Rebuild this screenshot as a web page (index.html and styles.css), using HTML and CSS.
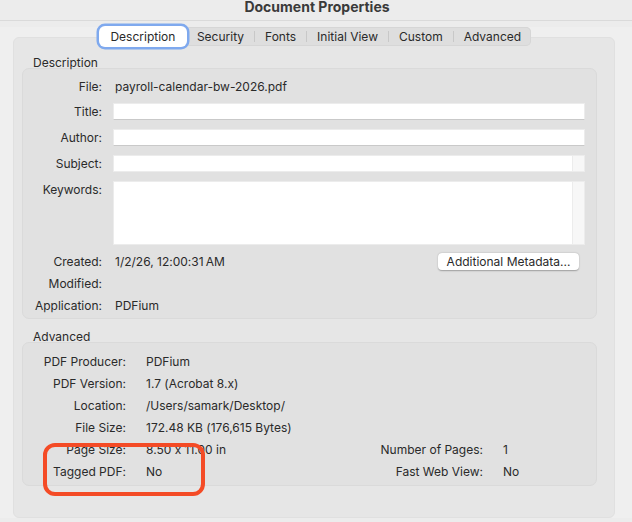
FILE: index.html
```html
<!DOCTYPE html>
<html>
<head>
    <title>Document Properties</title>
    <link rel="stylesheet" href="styles.css">
</head>
<body>
    <div class="titlebar">
        <h1>Document Properties</h1>
    </div>

    <div class="content">
        <div class="tabs">
            <button class="tab active">Description</button>
            <button class="tab">Security</button>
            <span class="sep"></span>
            <button class="tab">Fonts</button>
            <span class="sep"></span>
            <button class="tab">Initial View</button>
            <span class="sep"></span>
            <button class="tab">Custom</button>
            <span class="sep"></span>
            <button class="tab">Advanced</button>
        </div>

        <div class="panel">
            <div class="group-label">Description</div>
            <div class="group desc">
                <div class="row row-file">
                    <span class="label">File:</span>
                    <span class="value">payroll-calendar-bw-2026.pdf</span>
                </div>
                <div class="row row-field">
                    <span class="label">Title:</span>
                    <div class="field"></div>
                </div>
                <div class="row row-field">
                    <span class="label">Author:</span>
                    <div class="field"></div>
                </div>
                <div class="row row-field">
                    <span class="label">Subject:</span>
                    <div class="field scroll"><div class="track"></div></div>
                </div>
                <div class="row row-field row-keywords">
                    <span class="label">Keywords:</span>
                    <div class="field scroll tall"><div class="track"></div></div>
                </div>
                <div class="row row-info first">
                    <span class="label">Created:</span>
                    <span class="value">1/2/26, 12:00:31&#8201;AM</span>
                    <button class="meta-btn">Additional Metadata...</button>
                </div>
                <div class="row row-info">
                    <span class="label">Modified:</span>
                    <span class="value"></span>
                </div>
                <div class="row row-info">
                    <span class="label">Application:</span>
                    <span class="value">PDFium</span>
                </div>
            </div>

            <div class="group-label">Advanced</div>
            <div class="group adv">
                <span class="label">PDF Producer:</span>
                <span class="value wide">PDFium</span>
                <span class="label">PDF Version:</span>
                <span class="value wide">1.7 (Acrobat 8.x)</span>
                <span class="label">Location:</span>
                <span class="value wide">/Users/samark/Desktop/</span>
                <span class="label">File Size:</span>
                <span class="value wide">172.48 KB (176,615 Bytes)</span>
                <span class="label">Page Size:</span>
                <span class="value">8.50 x 11.00 in</span>
                <span class="label">Number of Pages:</span>
                <span class="value">1</span>
                <span class="label">Tagged PDF:</span>
                <span class="value">No</span>
                <span class="label">Fast Web View:</span>
                <span class="value">No</span>
            </div>
        </div>
    </div>

    <div class="highlight"></div>
</body>
</html>
```

FILE: styles.css
```css
* {
    margin: 0;
    padding: 0;
    box-sizing: border-box;
}

body {
    background: #ececec;
    font-family: 'Inter', 'Roboto', sans-serif;
    font-size: 12px;
    font-feature-settings: "calt" 0;
    color: #2a2a2a;
    width: 632px;
    height: 522px;
    overflow: hidden;
}

.titlebar {
    height: 21px;
    border-bottom: 1px solid #dadada;
    overflow: hidden;
}

.titlebar h1 {
    font-size: 14px;
    font-weight: 700;
    color: #3a3a3a;
    text-align: center;
    line-height: 14px;
    padding-left: 2px;
}

.content {
    padding: 0 17px 0 13px;
    background: #efefef;
}

.tabs {
    position: relative;
    z-index: 1;
    display: flex;
    align-items: center;
    width: fit-content;
    height: 19px;
    margin: 6px auto -9px;
    background: #dedede;
    border-radius: 5px;
    box-shadow: inset 0 0 0 1px #d6d6d6;
    transform: translateX(1px);
}

.tab {
    font: inherit;
    color: #2a2a2a;
    background: none;
    border: none;
    height: 19px;
    padding: 0 10px;
    white-space: nowrap;
}

.tab.active {
    background: #fff;
    border-radius: 6px;
    height: 21px;
    width: 88px;
    padding: 0;
    box-shadow: 0 0 0 2.5px #7fa9ee;
}

.sep {
    width: 1px;
    height: 11px;
    background: #c8c8c8;
}

.panel {
    background: #e6e6e6;
    border: 1px solid #e0e0e0;
    border-radius: 6px;
    padding: 17px 17px 40px 8px;
    height: 481px;
}

.group-label {
    padding-left: 11px;
    line-height: 15px;
    margin-bottom: -2px;
}

.group {
    background: #e1e1e1;
    border: 1px solid #dadada;
    border-radius: 7px;
}

.desc {
    padding: 10px 11px 2px 0;
    margin-bottom: 10px;
}

.row {
    display: flex;
    align-items: center;
}

.row .label {
    width: 79px;
    text-align: right;
    flex-shrink: 0;
    margin-right: 11px;
}

.row .value {
    padding-left: 2px;
}

.row-file {
    height: 15px;
}

.row-field {
    margin-top: 9px;
}

.row-keywords {
    align-items: flex-start;
}

.row-keywords .label {
    padding-top: 1px;
}

.field {
    flex: 1;
    height: 17px;
    background: #fff;
    border: 1px solid #ececec;
    border-bottom: 1px solid #c9c9c9;
    display: flex;
    justify-content: flex-end;
}

.field.scroll {
    border-bottom-color: #ececec;
}

.field.tall {
    height: 64px;
}

.track {
    width: 12px;
    background: #f7f7f7;
    border-left: 1px solid #ececec;
}

.row-info {
    height: 22px;
}

.row-info.first {
    margin-top: 5px;
}

.meta-btn {
    margin-left: auto;
    margin-right: 6px;
    font: inherit;
    color: #2a2a2a;
    background: #fff;
    border: none;
    border-radius: 4px;
    width: 141px;
    height: 17px;
    box-shadow: 0 0.5px 1.5px rgba(0, 0, 0, 0.3);
}

.adv {
    display: grid;
    grid-template-columns: 103px 187px 130px auto;
    grid-auto-rows: 22px;
    column-gap: 20px;
    align-items: center;
    padding: 7px 0 3px;
}

.adv .label {
    text-align: right;
}

.adv .value.wide {
    grid-column: 2 / 5;
}

.highlight {
    position: absolute;
    left: 43px;
    top: 443px;
    width: 162px;
    height: 53px;
    border: 4px solid #f44b26;
    border-radius: 12px;
}
```
